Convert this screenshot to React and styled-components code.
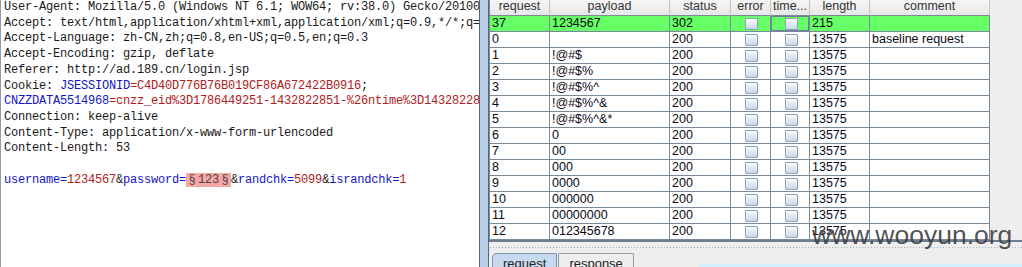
import React from "react"
import styled, { createGlobalStyle } from 'styled-components';

const Global = createGlobalStyle`
html, body {
margin: 0;
padding: 0;
background: #ffffff;
}
body {
width: 1022px;
height: 267px;
overflow: hidden;
}
`

const Screen = styled.div`
position: relative;
display: flex;
width: 1022px;
height: 267px;
overflow: hidden;
background: #eeeeee;
`

const RequestPane = styled.div`
width: 478px;
height: 267px;
background: #ffffff;
border-left: 1px solid #8d9db0;
border-right: 1px solid #56667a;
overflow: hidden;
`

const RequestText = styled.pre`
margin: 0;
padding: 0 0 0 3px;
font-family: "Liberation Mono", "DejaVu Sans Mono", monospace;
font-size: 12px;
letter-spacing: -0.2px;
line-height: 15.7px;
color: #1a1a1a;
white-space: pre;
`

const Part = styled.span`
color: ${p => p.$kind === 'name' ? '#1515c8' : p.$kind === 'value' ? '#b0201c' : '#1a1a1a'};
`

const Marker = styled.span`
background: #f5a8a6;
color: #444444;
`

const Section = styled.span`
display: inline-block;
width: 12px;
text-align: center;
letter-spacing: 0;
`

const Splitter = styled.div`
width: 8px;
height: 267px;
background: #b9d0e9;
border-right: 1px solid #56667a;
`

const ResultsPane = styled.div`
flex: 1;
display: flex;
flex-direction: column;
`

const TableArea = styled.div`
display: flex;
height: 240px;
border-bottom: 2px solid #6e7e90;
background: #eeeeee;
`

const Table = styled.div`
width: 500px;
border-left: 1px solid #7b8a99;
background: #ffffff;
`

const Row = styled.div`
display: grid;
grid-template-columns: 60px 120px 61px 40px 39px 60px 120px;
height: 16px;
background: ${p => p.$hit ? '#66ff66' : '#ffffff'};
`

const HeadRow = styled(Row)`
background: linear-gradient(#f6f6f6, #e6e6e6);
`

const HeadCell = styled.div`
box-sizing: border-box;
height: 16px;
border-right: 1px solid #c4c4c4;
border-bottom: 1px solid #7b8a99;
font-family: "Liberation Sans", Arial, sans-serif;
font-size: 12.5px;
line-height: 12px;
color: #333333;
text-align: center;
white-space: nowrap;
overflow: hidden;
`

const Cell = styled.div`
box-sizing: border-box;
height: 16px;
padding-left: 2px;
border-right: 1px solid #7b8a99;
border-bottom: 1px solid #7b8a99;
font-family: "Liberation Sans", Arial, sans-serif;
font-size: 12.5px;
line-height: 15px;
color: #0a0a14;
white-space: nowrap;
overflow: hidden;
display: flex;
align-items: center;
justify-content: ${p => p.$center ? 'center' : 'flex-start'};
box-shadow: ${p => p.$focus ? 'inset 0 0 0 1px #6b7f98' : 'none'};
`

const Box = styled.span`
box-sizing: border-box;
width: 13px;
height: 12px;
border: 1px solid #8fa2b6;
border-radius: 1px;
background: linear-gradient(#fafcfe, #c6d6e8);
`

const Divider = styled.div`
height: 11px;
background-color: #eeeeee;
background-image: radial-gradient(#a5adb5 0.7px, transparent 0.9px);
background-size: 3px 3px;
background-position: 0 4px;
background-repeat: repeat-x;
`

const TabBar = styled.div`
flex: 1;
display: flex;
align-items: flex-end;
padding-left: 3px;
background: #eeeeee;
`

const Tab = styled.div`
box-sizing: border-box;
height: 14px;
padding: 3px 10px 0 10px;
margin-right: ${p => p.$active ? '1px' : '0'};
border: 1px solid ${p => p.$active ? '#7e93ab' : '#9a9a9a'};
border-bottom: none;
border-radius: ${p => p.$active ? '5px' : '2px'} 2px 0 0;
background: ${p => p.$active ? '#c7daef' : '#eeeeee'};
font-family: "Liberation Sans", Arial, sans-serif;
font-size: 13px;
line-height: 13px;
color: #222222;
overflow: hidden;
`

const Strip = styled.div`
flex: 1;
height: 3px;
margin-left: 65px;
background: #d2f0fd;
`

const Watermark = styled.div`
position: absolute;
left: 812px;
top: 220px;
font-family: "Liberation Sans", Arial, sans-serif;
font-size: 26.5px;
line-height: 30px;
color: rgba(60, 60, 60, 0.88);
pointer-events: none;
`

const headers = ['request', 'payload', 'status', 'error', 'time...', 'length', 'comment']

const results = [
  ['37', '1234567', '302', '215', ''],
  ['0', '', '200', '13575', 'baseline request'],
  ['1', '!@#$', '200', '13575', ''],
  ['2', '!@#$%', '200', '13575', ''],
  ['3', '!@#$%^', '200', '13575', ''],
  ['4', '!@#$%^&', '200', '13575', ''],
  ['5', '!@#$%^&*', '200', '13575', ''],
  ['6', '0', '200', '13575', ''],
  ['7', '00', '200', '13575', ''],
  ['8', '000', '200', '13575', ''],
  ['9', '0000', '200', '13575', ''],
  ['10', '000000', '200', '13575', ''],
  ['11', '00000000', '200', '13575', ''],
  ['12', '012345678', '200', '13575', ''],
]

const plain = [
  'User-Agent: Mozilla/5.0 (Windows NT 6.1; WOW64; rv:38.0) Gecko/20100101 Firefox/38.0',
  'Accept: text/html,application/xhtml+xml,application/xml;q=0.9,*/*;q=0.8',
  'Accept-Language: zh-CN,zh;q=0.8,en-US;q=0.5,en;q=0.3',
  'Accept-Encoding: gzip, deflate',
  'Referer: http://ad.189.cn/login.jsp',
]

const Request = () => (
  <RequestText>
    {plain.map(l => l + '\n')}
    <Part>Cookie: </Part><Part $kind="name">JSESSIONID</Part><Part $kind="value">=C4D40D776B76B019CF86A672422B0916</Part><Part>;</Part>{'\n'}
    <Part $kind="name">CNZZDATA5514968</Part><Part $kind="value">=cnzz_eid%3D1786449251-1432822851-%26ntime%3D1432822851</Part>{'\n'}
    {'Connection: keep-alive\n'}
    {'Content-Type: application/x-www-form-urlencoded\n'}
    {'Content-Length: 53\n'}
    {'\n'}
    <Part $kind="name">username=</Part><Part $kind="value">1234567</Part><Part>&amp;</Part>
    <Part $kind="name">password=</Part>
    <Marker><Section>§</Section>123<Section>§</Section></Marker>
    <Part>&amp;</Part><Part $kind="name">randchk=</Part><Part $kind="value">5099</Part>
    <Part>&amp;</Part><Part $kind="name">israndchk=</Part><Part $kind="value">1</Part>
  </RequestText>
)

const App = () => {
  return (
    <Screen>
      <Global />
      <RequestPane>
        <Request />
      </RequestPane>
      <Splitter />
      <ResultsPane>
        <TableArea>
          <Table>
            <HeadRow>
              {headers.map(h => <HeadCell key={h}>{h}</HeadCell>)}
            </HeadRow>
            {results.map((r, i) => (
              <Row key={r[0]} $hit={i === 0}>
                <Cell>{r[0]}</Cell>
                <Cell>{r[1]}</Cell>
                <Cell>{r[2]}</Cell>
                <Cell $center><Box /></Cell>
                <Cell $center $focus={i === 0}><Box /></Cell>
                <Cell>{r[3]}</Cell>
                <Cell>{r[4]}</Cell>
              </Row>
            ))}
          </Table>
        </TableArea>
        <Divider />
        <TabBar>
          <Tab $active>request</Tab>
          <Tab>response</Tab>
          <Strip />
        </TabBar>
      </ResultsPane>
      <Watermark>www.wooyun.org</Watermark>
    </Screen>
  )
}

export default App
